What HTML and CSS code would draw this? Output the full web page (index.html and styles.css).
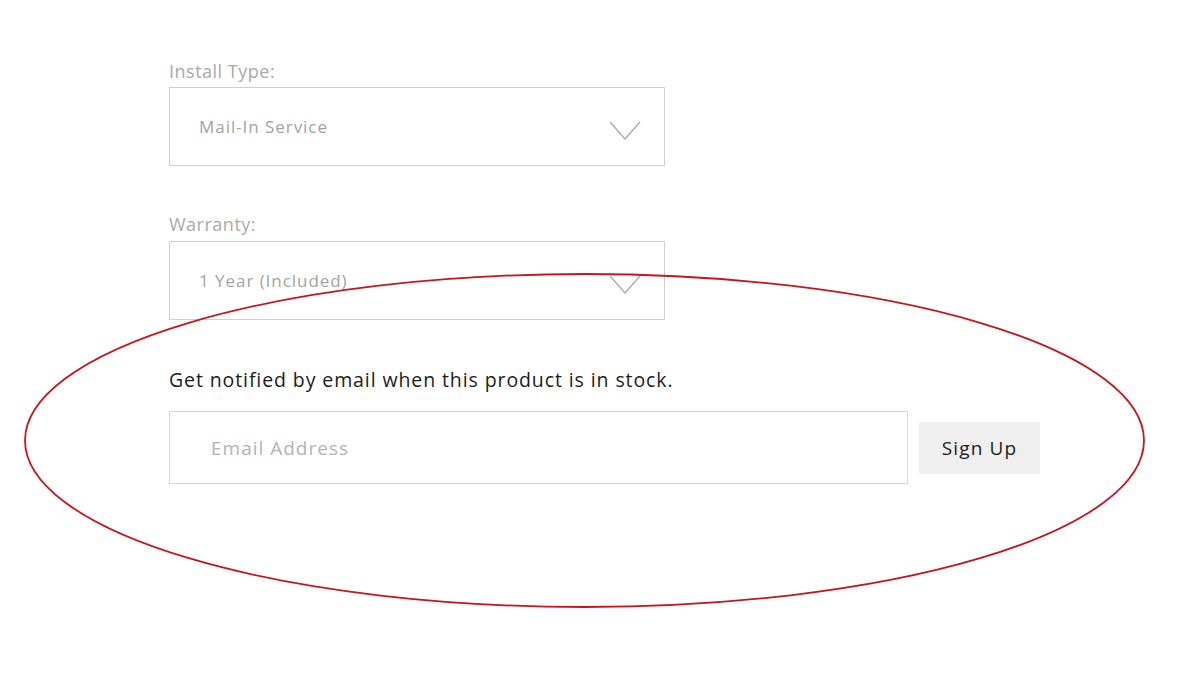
FILE: index.html
```html
<!DOCTYPE html>
<html lang="en">
<head>
<meta charset="utf-8">
<title>Product options</title>
<link rel="stylesheet" href="styles.css">
</head>
<body>
<div class="page">
  <form class="form">
    <div class="field">
      <div class="label">Install Type:</div>
      <div class="select">
        <span class="select-value">Mail-In Service</span>
        <svg class="chevron" width="32" height="20" viewBox="0 0 32 20"><path d="M1 1 L16 18 L31 1" fill="none" stroke="#a8a8a8" stroke-width="1.3"/></svg>
      </div>
    </div>
    <div class="field">
      <div class="label">Warranty:</div>
      <div class="select">
        <span class="select-value">1 Year (Included)</span>
        <svg class="chevron" width="32" height="20" viewBox="0 0 32 20"><path d="M1 1 L16 18 L31 1" fill="none" stroke="#a8a8a8" stroke-width="1.3"/></svg>
      </div>
    </div>
    <p class="notice">Get notified by email when this product is in stock.</p>
    <div class="signup">
      <div class="email">Email Address</div>
      <button type="button" class="btn">Sign Up</button>
    </div>
  </form>
  <svg class="highlight" width="1181" height="693" viewBox="0 0 1181 693"><ellipse cx="584.5" cy="440.5" rx="559.5" ry="166.5" fill="none" stroke="#c8141b" stroke-width="1.8"/></svg>
</div>
</body>
</html>
```
FILE: styles.css
```css
html, body {
  margin: 0;
  padding: 0;
  background: #ffffff;
}
body {
  font-family: "Open Sans", "Liberation Sans", sans-serif;
}
.page {
  position: relative;
  width: 1181px;
  height: 693px;
  overflow: hidden;
}
.form {
  margin: 0;
  padding: 61px 0 0 169px;
  width: 872px;
}
.field {
  width: 496px;
  margin-bottom: 48px;
}
.field + .field {
  margin-bottom: 49px;
}
.label {
  font-size: 18px;
  line-height: 20px;
  color: #a9a9a9;
  margin-bottom: 6px;
  letter-spacing: 0.5px;
}
.field + .field .label {
  margin-bottom: 7px;
}
.select {
  box-sizing: border-box;
  height: 79px;
  border: 1px solid #cfcfcf;
  display: flex;
  align-items: center;
  justify-content: space-between;
  padding: 0 22px 0 29px;
}
.select-value {
  font-size: 17px;
  color: #a3a3a3;
  letter-spacing: 0.95px;
}
.chevron {
  display: block;
  margin-top: 9px;
  margin-right: 1px;
}
.notice {
  margin: 0 0 20px 0;
  font-size: 19.5px;
  line-height: 22px;
  color: #1c1c1c;
  letter-spacing: 0.9px;
}
.signup {
  display: flex;
  align-items: center;
  gap: 11px;
}
.email {
  box-sizing: border-box;
  width: 739px;
  height: 73px;
  border: 1px solid #d8d8d8;
  padding: 0 0 0 41px;
  display: flex;
  align-items: center;
  font-size: 19px;
  color: #b3b3b3;
  letter-spacing: 1px;
}
.btn {
  width: 121px;
  height: 52px;
  border: none;
  background: #efefef;
  font-family: "Open Sans", "Liberation Sans", sans-serif;
  font-size: 19px;
  color: #1c1c1c;
  letter-spacing: 1.1px;
  padding: 0;
  margin-top: 1px;
}
.highlight {
  position: absolute;
  left: 0;
  top: 0;
  pointer-events: none;
}
```
